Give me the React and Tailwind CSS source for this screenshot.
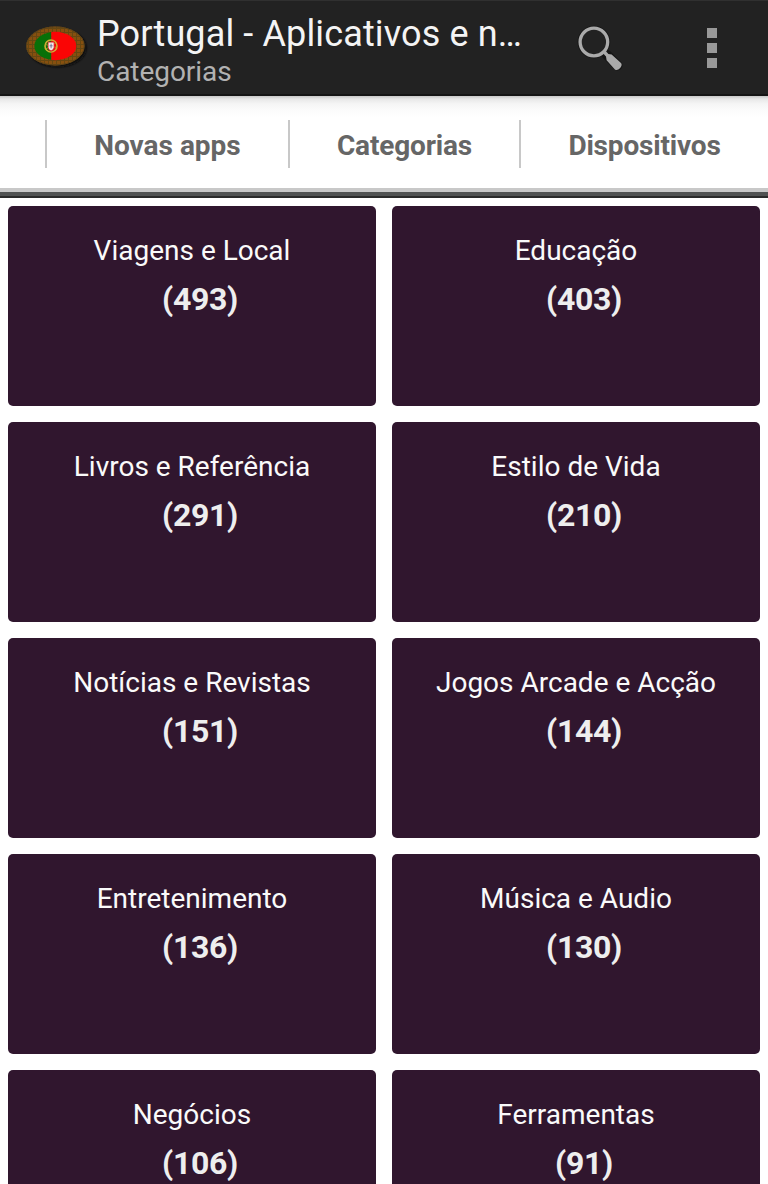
const categories = [
  ['Viagens e Local', 493],
  ['Educação', 403],
  ['Livros e Referência', 291],
  ['Estilo de Vida', 210],
  ['Notícias e Revistas', 151],
  ['Jogos Arcade e Acção', 144],
  ['Entretenimento', 136],
  ['Música e Audio', 130],
  ['Negócios', 106],
  ['Ferramentas', 91],
];

function FlagIcon() {
  return (
    <svg className="h-12 w-[72px] shrink-0" viewBox="20 24 72 48" aria-hidden="true">
      <defs>
        <pattern id="weave" width="4" height="4" patternUnits="userSpaceOnUse">
          <rect width="4" height="4" fill="#87500f" />
          <path d="M0 .5h4M.5 0v4" stroke="#664712" strokeWidth="1" />
        </pattern>
        <clipPath id="flag"><ellipse cx="55.3" cy="46" rx="21" ry="14.2" /></clipPath>
        <filter id="soft" x="-20%" y="-20%" width="140%" height="140%"><feGaussianBlur stdDeviation="1.2" /></filter>
      </defs>
      <ellipse cx="57.5" cy="48" rx="29" ry="19.3" fill="#0c0c0c" filter="url(#soft)" />
      <ellipse cx="55.4" cy="46" rx="29.2" ry="19.4" fill="url(#weave)" />
      <ellipse cx="55.4" cy="46" rx="28.8" ry="19" fill="none" stroke="#5d4318" />
      <g clipPath="url(#flag)">
        <path d="M30 28h21.3v36H30z" fill="#087008" />
        <path d="M51.3 28H80v36H51.3z" fill="#fa0505" />
      </g>
      <circle cx="51" cy="46" r="6" fill="none" stroke="#d0ad35" strokeWidth="1.6" />
      <path d="M45.5 44.5l11 3M46 49l9.5-6" stroke="#c9a32a" strokeWidth=".8" />
      <path d="M47.7 41.8h6.8v5.5q-.3 3.4-3.4 4.2-3.1-.8-3.4-4.2z" fill="#d8232a" />
      <path d="M48.5 42.4h5.2v4.9q-.2 2.4-2.6 3.1-2.4-.7-2.6-3.1z" fill="#f4e9e9" />
      <path d="M51.1 43.7v4.5M49.6 45.8h3" stroke="#5d618a" strokeWidth=".8" />
    </svg>
  );
}

function SearchIcon() {
  return (
    <svg className="h-12 w-12" viewBox="576 24 48 48" aria-hidden="true">
      <g fill="none" stroke="#151515">
        <circle cx="593.9" cy="42" r="13.6" strokeWidth="5.5" />
        <path d="M607 55l10.5 10.5" strokeWidth="10" strokeLinecap="round" />
      </g>
      <circle cx="593.9" cy="42" r="13.8" fill="#222" stroke="#aaa" strokeWidth="3.3" />
      <path d="M602.8 53l2.5-2.5 3.1 3.4 3.2.6 9.4 8.6q1.6 2.2-.8 4.8-2.8 3.1-5.3 1.5l-8.3-9.2-.6-3.8z" fill="#aaa" />
    </svg>
  );
}

function Tab({ children, className = '' }) {
  return <div className={`flex h-12 shrink-0 items-center justify-center border-l-2 border-[#c8c8c8] pt-[3px] ${className}`}>{children}</div>;
}

export default function App() {
  return (
    <main className="h-[1184px] w-full overflow-hidden bg-white font-['Roboto',sans-serif]">
      <header className="flex h-24 items-center border-b-2 border-t border-b-[#151515] border-t-[#303030] bg-[#222] pl-5 pr-[51px]">
        <FlagIcon />
        <div className="ml-[5px] w-[432px] pt-[6px]">
          <h1 className="whitespace-nowrap text-[36px] leading-[42px] tracking-[0.13px] text-[#f4f4f4]">Portugal - Aplicativos e n…</h1>
          <p className="text-[28px] leading-[33px] tracking-[-0.05px] text-[#b2b2b2]">Categorias</p>
        </div>
        <button className="ml-auto" aria-label="Pesquisar"><SearchIcon /></button>
        <button className="ml-[83px] flex flex-col gap-[5px]" aria-label="Mais opções">
          <span className="size-2.5 bg-[#999]" /><span className="size-2.5 bg-[#999]" /><span className="size-2.5 bg-[#999]" />
        </button>
      </header>
      <nav className="h-[92px] bg-[linear-gradient(to_bottom,#c8c8c8_0px,#e8e8e8_3px,#f5f5f5_8px,#fcfcfc_15px,#ffffff_22px)] pl-[45px] pt-6 text-[28px] font-bold text-[#666]">
        <div className="flex overflow-hidden">
          <Tab className="w-[243px]">Novas apps</Tab>
          <Tab className="w-[231px] tracking-[-0.15px]">Categorias</Tab>
          <Tab className="w-[249px] tracking-[-0.18px]">Dispositivos</Tab>
        </div>
      </nav>
      <div className="h-1 bg-[#c8c8c8]" />
      <div className="h-1.5 border-b-2 border-[#2a2a2a] bg-[#505252]" />
      <section className="grid grid-cols-2 gap-4 p-2">
        {categories.map(([name, count]) => (
          <article key={name} className="flex h-[200px] flex-col items-center rounded-[5px] bg-[#30162e] pt-[29px]">
            <h2 className="text-[28px] leading-8 text-[#fafafa]">{name}</h2>
            <p className="mt-[13px] pl-4 text-[32px] font-bold leading-[38px] tracking-[-0.3px] text-[#eee]">({count})</p>
          </article>
        ))}
      </section>
    </main>
  );
}
